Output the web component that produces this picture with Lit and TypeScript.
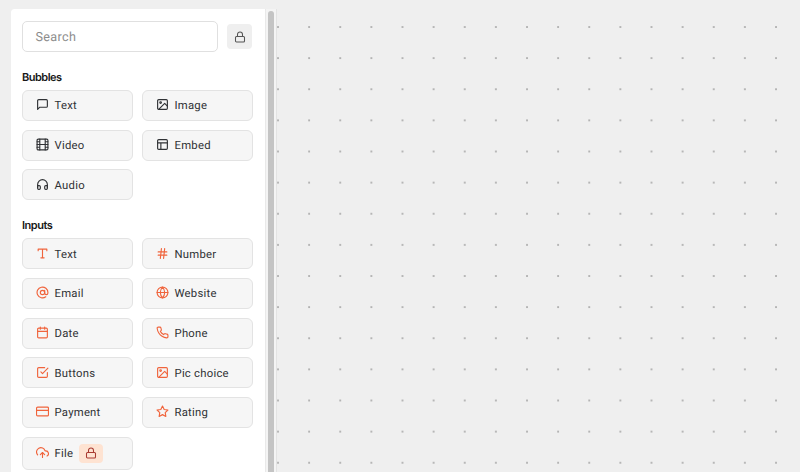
import { LitElement, html, css, svg } from "lit";
import { customElement } from "lit/decorators.js";

const lock = svg`<rect x="3" y="11" width="18" height="11" rx="2"/><path d="M7 11V7a5 5 0 0 1 10 0v4"/>`;
const picture = svg`<rect x="3" y="3" width="18" height="18" rx="2"/><circle cx="8.5" cy="8.5" r="1.5"/><path d="M21 15l-5-5L5 21"/>`;

const bubbles = [
  { label: "Text", icon: svg`<path d="M21 15a2 2 0 0 1-2 2H7l-4 4V5a2 2 0 0 1 2-2h14a2 2 0 0 1 2 2z"/>` },
  { label: "Image", icon: picture },
  { label: "Video", icon: svg`<rect x="2" y="2" width="20" height="20" rx="2.2"/><path d="M7 2v20M17 2v20M2 12h20M2 7h5M2 17h5M17 17h5M17 7h5"/>` },
  { label: "Embed", icon: svg`<rect x="3" y="3" width="18" height="18" rx="2"/><path d="M3 9h18M9 21V9"/>` },
  { label: "Audio", icon: svg`<path d="M3 18v-6a9 9 0 0 1 18 0v6"/><path d="M21 19a2 2 0 0 1-2 2h-1a2 2 0 0 1-2-2v-3a2 2 0 0 1 2-2h3zM3 19a2 2 0 0 0 2 2h1a2 2 0 0 0 2-2v-3a2 2 0 0 0-2-2H3z"/>` },
];

const inputs = [
  { label: "Text", icon: svg`<path d="M4 7V4h16v3M9 20h6M12 4v16"/>` },
  { label: "Number", icon: svg`<path d="M4 9h16M4 15h16M10 3L8 21M16 3l-2 18"/>` },
  { label: "Email", icon: svg`<circle cx="12" cy="12" r="4"/><path d="M16 8v5a3 3 0 0 0 6 0v-1a10 10 0 1 0-3.92 7.94"/>` },
  { label: "Website", icon: svg`<circle cx="12" cy="12" r="10"/><path d="M2 12h20M12 2a15.3 15.3 0 0 1 4 10 15.3 15.3 0 0 1-4 10 15.3 15.3 0 0 1-4-10 15.3 15.3 0 0 1 4-10z"/>` },
  { label: "Date", icon: svg`<rect x="3" y="4" width="18" height="18" rx="2"/><path d="M16 2v4M8 2v4M3 10h18"/>` },
  { label: "Phone", icon: svg`<path d="M22 16.92v3a2 2 0 0 1-2.18 2 19.79 19.79 0 0 1-8.63-3.07 19.5 19.5 0 0 1-6-6 19.79 19.79 0 0 1-3.07-8.67A2 2 0 0 1 4.11 2h3a2 2 0 0 1 2 1.72 12.84 12.84 0 0 0 .7 2.81 2 2 0 0 1-.45 2.11L8.09 9.91a16 16 0 0 0 6 6l1.27-1.27a2 2 0 0 1 2.11-.45 12.84 12.84 0 0 0 2.81.7A2 2 0 0 1 22 16.92z"/>` },
  { label: "Buttons", icon: svg`<path d="M9 11l3 3L22 4"/><path d="M21 12v7a2 2 0 0 1-2 2H5a2 2 0 0 1-2-2V5a2 2 0 0 1 2-2h11"/>` },
  { label: "Pic choice", icon: picture },
  { label: "Payment", icon: svg`<rect x="1" y="4" width="22" height="16" rx="2"/><path d="M1 10h22"/>` },
  { label: "Rating", icon: svg`<path d="M12 2l3.09 6.26L22 9.27l-5 4.87 1.18 6.88L12 17.77l-6.18 3.25L7 14.14 2 9.27l6.91-1.01L12 2z"/>` },
  { label: "File", locked: true, icon: svg`<path d="M16 16l-4-4-4 4M12 12v9"/><path d="M20.39 18.39A5 5 0 0 0 18 9h-1.26A8 8 0 1 0 3 16.3"/>` },
];

const icon = (shape: unknown) => html`<svg viewBox="0 0 24 24" aria-hidden="true">${shape}</svg>`;

@customElement("app-root")
export class AppRoot extends LitElement {
  static styles = css`
    :host {
      display: block;
      box-sizing: border-box;
      height: 472px;
      padding: 9px 0 0 11px;
      overflow: hidden;
      background-color: #efefef;
      background-image: radial-gradient(circle at 1px 1px, #aaa 0.6px, transparent 1.1px);
      background-size: 31.13px 31.13px;
      background-position: 277px 26px;
      font-family: Roboto, sans-serif;
      text-rendering: geometricPrecision;
      color: #303235;
    }
    * { box-sizing: border-box; }
    svg {
      display: block;
      flex: none;
      width: 13px;
      height: 13px;
      fill: none;
      stroke: currentColor;
      stroke-width: 2.1;
      stroke-linecap: round;
      stroke-linejoin: round;
    }
    .panel {
      display: flex;
      width: 266px;
      height: 480px;
      background: #f4f4f4;
      border-right: 1px solid #e3e3e3;
      border-radius: 4px 0 0 0;
    }
    .content {
      width: 254px;
      padding: 12px 13px 0 11px;
      background: #fff;
      border-radius: 4px 0 0 0;
    }
    .track { width: 11px; padding: 2px 0 0 2px; border-left: 1px solid #e9e9e9; }
    .thumb { width: 6px; height: 500px; border-radius: 3px; background: #c4c4c4; }
    .top { display: flex; align-items: center; justify-content: space-between; }
    .search {
      width: 196px;
      height: 31px;
      padding: 1px 12.5px 0;
      border: 1px solid #e0e0e0;
      border-radius: 5px;
      font-size: 12.6px;
      line-height: 30px;
      letter-spacing: 0.35px;
      color: #8c8c8c;
    }
    .toggle {
      display: grid;
      place-items: center;
      width: 25px;
      height: 25px;
      border-radius: 4px;
      background: #efefef;
      color: #555;
    }
    .toggle svg { width: 12px; height: 12px; }
    h2 {
      margin: 17px 0 5px;
      height: 16px;
      font: 600 11px/16px Inter, sans-serif;
      letter-spacing: -0.5px;
      color: #181818;
    }
    .second { margin-top: 17px; }
    .grid {
      display: grid;
      grid-template-columns: 111px 111px;
      column-gap: 9px;
      row-gap: 8.7px;
    }
    .card {
      display: flex;
      align-items: center;
      height: 31px;
      padding-left: 12.5px;
      border: 1px solid #e3e3e3;
      border-radius: 6px;
      background: #f6f6f6;
      font-size: 11.3px;
      letter-spacing: 0.25px;
    }
    .card > svg { margin-bottom: 1.5px; }
    .locked { height: 33px; }
    .label { margin: 1.4px 0 0 6px; line-height: 16px; white-space: nowrap; }
    .orange svg { color: #f0643c; }
    .badge {
      display: grid;
      place-items: center;
      width: 24px;
      height: 19px;
      margin-left: 6px;
      border-radius: 4px;
      background: #fee3d2;
    }
    .orange .badge svg { width: 12px; height: 12px; color: #a93b32; }
  `;

  card(item: { label: string; icon: unknown; locked?: boolean }) {
    return html`<div class="card ${item.locked ? "locked" : ""}">
      ${icon(item.icon)}<span class="label">${item.label}</span>
      ${item.locked ? html`<span class="badge">${icon(lock)}</span>` : ""}
    </div>`;
  }

  render() {
    return html`<aside class="panel">
      <div class="content">
        <div class="top">
          <div class="search">Search</div>
          <div class="toggle">${icon(lock)}</div>
        </div>
        <h2>Bubbles</h2>
        <div class="grid">${bubbles.map((b) => this.card(b))}</div>
        <h2 class="second">Inputs</h2>
        <div class="grid orange">${inputs.map((b) => this.card(b))}</div>
      </div>
      <div class="track"><div class="thumb"></div></div>
    </aside>`;
  }
}
